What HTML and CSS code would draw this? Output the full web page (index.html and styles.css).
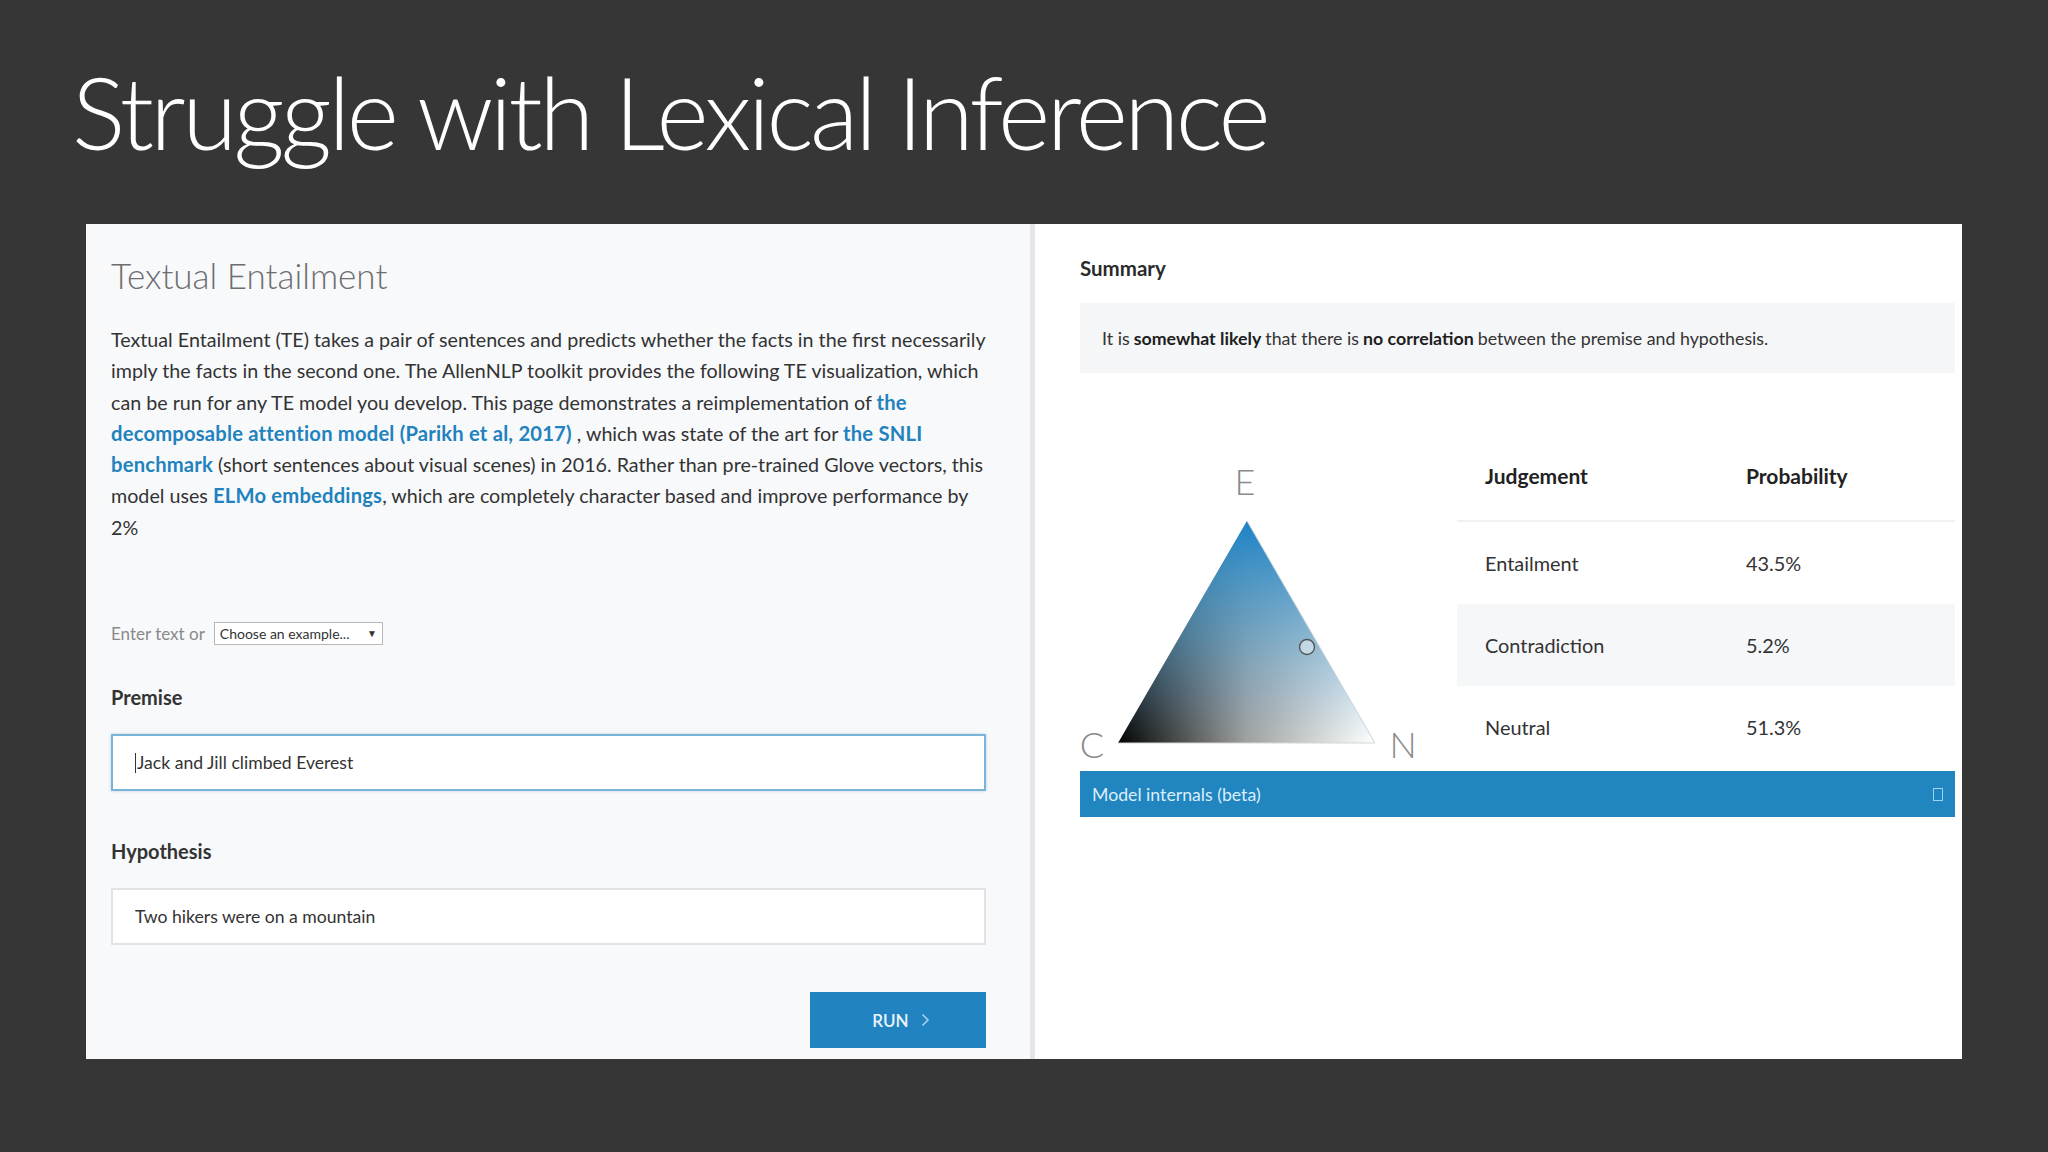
FILE: index.html
```html
<!DOCTYPE html>
<html lang="en">
<head>
<meta charset="utf-8">
<title>Struggle with Lexical Inference</title>
<link rel="stylesheet" href="styles.css">
</head>
<body>
<h1 class="slide-title">Struggle with Lexical Inference</h1>
<div class="demo">
  <section class="pane-left">
    <h2 class="model-title">Textual Entailment</h2>
    <p class="desc">Textual Entailment (TE) takes a pair of sentences and predicts whether the facts in the first necessarily<br>imply the facts in the second one. The AllenNLP toolkit provides the following TE visualization, which<br>can be run for any TE model you develop. This page demonstrates a reimplementation of <a class="lnk">the</a><br><a class="lnk">decomposable attention model (Parikh et al, 2017)</a> , which was state of the art for <a class="lnk">the SNLI</a><br><a class="lnk">benchmark</a> (short sentences about visual scenes) in 2016. Rather than pre-trained Glove vectors, this<br>model uses <a class="lnk">ELMo embeddings</a>, which are completely character based and improve performance by<br>2%</p>
    <div class="example-row">
      <span class="enter-text">Enter text or</span>
      <div class="select">Choose an example... <span class="caret">▼</span></div>
    </div>
    <div class="field-label first">Premise</div>
    <div class="input focused"><span class="cursor"></span>Jack and Jill climbed Everest</div>
    <div class="field-label">Hypothesis</div>
    <div class="input">Two hikers were on a mountain</div>
    <div class="run-row">
      <button class="run">RUN <svg class="chev" width="9" height="14" viewBox="0 0 9 14"><polyline points="1.5,1.5 7,7 1.5,12.5" fill="none" stroke="#a6d1ef" stroke-width="1.6"/></svg></button>
    </div>
  </section>
  <div class="divider"></div>
  <section class="pane-right">
    <h3 class="summary-title">Summary</h3>
    <div class="summary-box">It is <b>somewhat likely</b> that there is <b>no correlation</b> between the premise and hypothesis.</div>
    <div class="result-row">
      <svg class="triangle" width="377" height="341" viewBox="0 0 377 341">
        <defs>
          <linearGradient id="baseGrad" x1="38" y1="0" x2="295" y2="0" gradientUnits="userSpaceOnUse">
            <stop offset="0" stop-color="#000"/>
            <stop offset="0.5" stop-color="#a0a0a0"/>
            <stop offset="1" stop-color="#fff"/>
          </linearGradient>
          <linearGradient id="blueGrad" x1="0" y1="90" x2="0" y2="312" gradientUnits="userSpaceOnUse">
            <stop offset="0" stop-color="#1c83c7" stop-opacity="1"/>
            <stop offset="0.5" stop-color="#4a9fd2" stop-opacity="0.55"/>
            <stop offset="1" stop-color="#6db3dc" stop-opacity="0"/>
          </linearGradient>
        </defs>
        <polygon points="167,90 38,312 295,312" fill="url(#baseGrad)"/>
        <polygon points="167,90 38,312 295,312" fill="url(#blueGrad)"/>
        <line x1="167" y1="90" x2="295" y2="312" stroke="#c9d3da" stroke-width="1"/>
        <line x1="38" y1="312" x2="295" y2="312" stroke="#d5d5d5" stroke-width="1"/>
        <circle cx="227" cy="216" r="7.5" fill="#f4f8fb" fill-opacity="0.5" stroke="#555" stroke-width="1.4"/>
        <text class="tri-label" x="165" y="64" text-anchor="middle">E</text>
        <text class="tri-label" x="12" y="327" text-anchor="middle">C</text>
        <text class="tri-label" x="323" y="327" text-anchor="middle">N</text>
      </svg>
      <table class="probs">
        <thead>
          <tr><th>Judgement</th><th>Probability</th></tr>
        </thead>
        <tbody>
          <tr><td>Entailment</td><td>43.5%</td></tr>
          <tr class="alt"><td>Contradiction</td><td>5.2%</td></tr>
          <tr><td>Neutral</td><td>51.3%</td></tr>
        </tbody>
      </table>
    </div>
    <div class="internals-bar">
      <span>Model internals (beta)</span>
      <span class="box-icon"></span>
    </div>
  </section>
</div>
</body>
</html>
```
FILE: styles.css
```css
html, body {
  margin: 0;
  padding: 0;
}
body {
  background: #363636;
  width: 2048px;
  height: 1152px;
  overflow: hidden;
  font-family: "Lato", "Open Sans", sans-serif;
}
.slide-title {
  margin: 0;
  padding: 51px 0 0 72px;
  height: 121px;
  font-family: "Lato", "Open Sans", sans-serif;
  font-weight: 300;
  font-size: 100px;
  line-height: 120px;
  color: #ffffff;
  letter-spacing: -3.55px;
  white-space: nowrap;
}
.demo {
  margin: 52px 0 0 86px;
  width: 1876px;
  height: 835px;
  display: flex;
  background: #fff;
}
.pane-left {
  width: 944px;
  box-sizing: border-box;
  background: #f8f9fb;
  padding: 30px 44px 0 25px;
  display: flex;
  flex-direction: column;
}
.model-title {
  margin: 0;
  font-weight: 300;
  font-size: 35px;
  line-height: 42px;
  color: #6e6e6e;
}
.desc {
  margin: 28px 0 0;
  font-size: 19.7px;
  line-height: 31.3px;
  color: #333;
  white-space: nowrap;
}
.lnk {
  color: #2182bd;
  font-weight: 700;
  font-size: 20.2px;
  letter-spacing: 0.2px;
  text-decoration: none;
}
.example-row {
  margin-top: 79px;
  display: flex;
  align-items: center;
  gap: 9px;
  height: 23px;
}
.enter-text {
  font-size: 17px;
  color: #8a8a8a;
}
.select {
  height: 23px;
  width: 169px;
  box-sizing: border-box;
  border: 1px solid #b8b8b8;
  background: #fff;
  font-size: 14px;
  line-height: 21px;
  color: #333;
  padding: 0 5px;
  display: flex;
  justify-content: space-between;
}
.caret {
  font-size: 10px;
}
.field-label {
  margin-top: 48px;
  font-size: 20px;
  font-weight: 700;
  line-height: 24px;
  color: #333;
}
.field-label.first {
  margin-top: 40px;
}
.input {
  margin-top: 25px;
  height: 57px;
  box-sizing: border-box;
  border: 2px solid #e1e3e6;
  background: #fff;
  padding: 0 22px;
  display: flex;
  align-items: center;
  font-size: 17.6px;
  color: #333;
}
.input.focused {
  border-color: #79b3d8;
  box-shadow: 0 0 3px rgba(80, 150, 200, 0.35);
}
.cursor {
  display: inline-block;
  width: 1px;
  height: 20px;
  background: #333;
  margin-right: 1px;
}
.run-row {
  margin-top: 47px;
  display: flex;
  justify-content: flex-end;
}
.run {
  width: 176px;
  height: 56px;
  border: none;
  background: #2184c0;
  color: #eaf4fb;
  font-family: "Lato", sans-serif;
  font-size: 17px;
  font-weight: 600;
  display: flex;
  align-items: center;
  justify-content: center;
  gap: 12px;
  padding: 0 0 0 6px;
}
.chev {
  display: block;
}
.divider {
  width: 5px;
  background: #e4e6ea;
}
.pane-right {
  flex: 1;
  box-sizing: border-box;
  padding: 32px 7px 0 45px;
  display: flex;
  flex-direction: column;
}
.summary-title {
  margin: 0;
  font-size: 20.5px;
  font-weight: 700;
  line-height: 24px;
  color: #2b2b2b;
}
.summary-box {
  margin-top: 23px;
  height: 70px;
  background: #f5f6f8;
  padding: 0 22px;
  display: flex;
  align-items: center;
  font-size: 17.8px;
  color: #333;
}
.summary-box b {
  margin: 0 4px;
  font-weight: 700;
  color: #1e1e1e;
}
.result-row {
  margin-top: 58px;
  display: flex;
}
.triangle {
  display: block;
  flex: none;
}
.tri-label {
  font-family: "Lato", sans-serif;
  font-weight: 300;
  font-size: 36px;
  fill: #8a8a8a;
}
.probs {
  width: 498px;
  border-collapse: collapse;
  font-size: 19.9px;
  color: #333;
  align-self: flex-start;
}
.probs th {
  height: 89px;
  text-align: left;
  font-weight: 700;
  font-size: 21px;
  padding: 0 0 0 28px;
  border-bottom: 2px solid #f0f1f3;
  color: #222;
}
.probs th:first-child {
  width: 233px;
}
.probs td {
  height: 82px;
  padding: 0 0 0 28px;
}
.probs tr.alt td {
  background: #f6f7f9;
}
.internals-bar {
  margin-top: -1px;
  height: 46px;
  background: #2185c0;
  display: flex;
  align-items: center;
  justify-content: space-between;
  padding: 0 12px 0 12px;
  font-size: 17.7px;
  color: #dbeefb;
}
.box-icon {
  width: 8px;
  height: 11px;
  border: 1.5px solid #9fd2f3;
}
```
